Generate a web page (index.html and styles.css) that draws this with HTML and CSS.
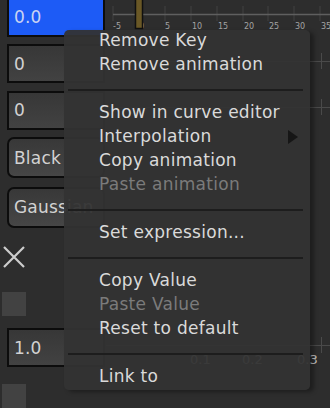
FILE: index.html
```html
<!DOCTYPE html>
<html lang="en">
  <head>
    <meta charset="UTF-8" />
    <title>Curve editor - context menu</title>
    <link rel="stylesheet" href="styles.css">
  </head>
  <body>
    <div class="editor">
      <div class="params">
        <div class="field field-active">0.0</div>
        <div class="field">0</div>
        <div class="field">0</div>
        <div class="choice">Black</div>
        <div class="choice">Gaussian</div>
        <svg class="check" width="22" height="22" viewBox="0 0 22 22">
          <path d="M1 1 L21 21 M21 1 L1 21" />
        </svg>
        <div class="swatch"></div>
        <div class="field">1.0</div>
        <div class="swatch"></div>
      </div>

      <svg class="curves" width="224" height="408" viewBox="0 0 224 408">
        <g class="ticks">
          <path d="M7 6V21 M33 6V21 M59 6V21 M85 6V21 M111 6V21 M137 6V21 M162 6V21 M188 6V21 M214 6V21" />
        </g>
        <path class="axis" d="M7 14.5H224" />
        <g class="ruler-labels">
          <text x="7" y="28.5">-5</text>
          <text x="33" y="28.5">0</text>
          <text x="59" y="28.5">5</text>
          <text x="86" y="28.5">10</text>
          <text x="112" y="28.5">15</text>
          <text x="138" y="28.5">20</text>
          <text x="163" y="28.5">25</text>
          <text x="189" y="28.5">30</text>
          <text x="215" y="28.5">35</text>
        </g>
        <g class="rows">
          <path d="M0 61.5H224 M0 107.5H224 M0 345.5H224" />
          <path d="M215.5 53V69 M215.5 99V115 M215.5 337V353" />
        </g>
        <g class="value-labels">
          <text x="84" y="364">0.1</text>
          <text x="136" y="364">0.2</text>
          <text x="191" y="364">0.3</text>
        </g>
        <rect class="playhead" x="29.5" y="-2" width="7" height="30.5" />
      </svg>
    </div>

    <div class="context-menu">
      <div class="item">Remove Key</div>
      <div class="item">Remove animation</div>
      <div class="separator"></div>
      <div class="item">Show in curve editor</div>
      <div class="item">Interpolation <span class="submenu-arrow"></span></div>
      <div class="item">Copy animation</div>
      <div class="item disabled">Paste animation</div>
      <div class="separator"></div>
      <div class="item">Set expression...</div>
      <div class="separator"></div>
      <div class="item">Copy Value</div>
      <div class="item disabled">Paste Value</div>
      <div class="item">Reset to default</div>
      <div class="separator"></div>
      <div class="item">Link to</div>
    </div>
  </body>
</html>
```

FILE: styles.css
```css
body {
  margin: 0;
  width: 330px;
  height: 408px;
  overflow: hidden;
  position: relative;
  background-color: #2d2d2d;
  color: #d4d4d4;
  font-family: "DejaVu Sans", sans-serif;
  font-size: 17px;
}

.editor {
  display: flex;
  height: 408px;
}

.params {
  width: 99px;
  padding-left: 7px;
  margin-top: -6px;
  display: grid;
  grid-template-rows: 46px 47px 46px 49px 50px 50px 44px 43px 54px;
  align-items: center;
  justify-items: start;
}

.field {
  box-sizing: border-box;
  width: 98px;
  height: 39px;
  padding-left: 5px;
  display: flex;
  align-items: center;
  border: 2px solid #0c0c0c;
  background: linear-gradient(#373737, #424242);
  color: #d2d2d2;
  letter-spacing: 0.2px;
  white-space: nowrap;
}

.field-active {
  background: #1d5bf6;
  color: #c9d3f2;
}

.choice {
  box-sizing: border-box;
  width: 98px;
  height: 41px;
  padding-left: 5px;
  display: flex;
  align-items: center;
  border: 2px solid #0c0c0c;
  border-radius: 7px;
  background: linear-gradient(#383838, #464646);
  color: #d2d2d2;
  letter-spacing: 0.2px;
  white-space: nowrap;
  overflow: hidden;
}

.check {
  margin-left: -4px;
}

.check path {
  stroke: #cdcdcd;
  stroke-width: 2.2;
  fill: none;
}

.swatch {
  width: 24px;
  height: 24px;
  margin-left: -5px;
  background-color: #424242;
}

.curves {
  display: block;
  flex: none;
}

.ticks path {
  stroke: #434343;
  stroke-width: 1;
}

.axis {
  stroke: #5f5f5f;
  stroke-width: 1.5;
}

.ruler-labels text {
  fill: #a4a4a4;
  font-size: 8px;
}

.rows path {
  stroke: #4a4a4a;
  stroke-width: 1;
}

.value-labels text {
  fill: #c4c4c4;
  font-size: 13px;
}

.playhead {
  fill: #6a5826;
  stroke: #101010;
  stroke-width: 1.5;
}

/* context menu sits on top of the editor */
.context-menu {
  position: absolute;
  left: 64px;
  top: 30px;
  width: 246px;
  background-color: rgba(51, 51, 51, 0.95);
  border-radius: 5px;
  box-shadow: 4px 2px 4px rgba(0, 0, 0, 0.35);
}

.item {
  height: 24px;
  line-height: 20px;
  padding-left: 35px;
  padding-right: 12px;
  display: flex;
  justify-content: space-between;
  color: #dadada;
  letter-spacing: 0.28px;
  white-space: nowrap;
}

.item.disabled {
  color: #7b7b7b;
}

.submenu-arrow {
  width: 0;
  height: 0;
  margin-top: 4px;
  border-left: 10px solid #161616;
  border-top: 7px solid transparent;
  border-bottom: 7px solid transparent;
}

.separator {
  height: 24px;
  display: flex;
  align-items: center;
  margin: 0 7px 0 4px;
}

.separator::before {
  content: "";
  flex: 1;
  height: 2px;
  background-color: #1d1d1d;
}
```
